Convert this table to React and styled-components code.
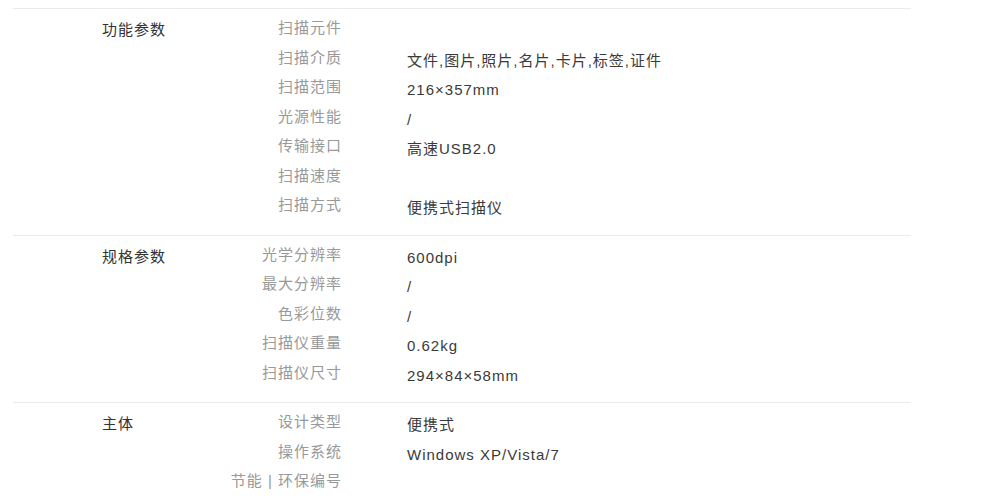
import React from 'react'
import styled, { createGlobalStyle } from 'styled-components'

const GlobalStyle = createGlobalStyle`
  body {
    margin: 8px;
    background: #fff;
    font-family: "Liberation Sans", "Noto Sans CJK SC", sans-serif;
  }
`

const sections = [
  {
    title: '功能参数',
    specs: [
      ['扫描元件', ''],
      ['扫描介质', '文件,图片,照片,名片,卡片,标签,证件'],
      ['扫描范围', '216×357mm'],
      ['光源性能', '/'],
      ['传输接口', '高速USB2.0'],
      ['扫描速度', ''],
      ['扫描方式', '便携式扫描仪'],
    ],
  },
  {
    title: '规格参数',
    specs: [
      ['光学分辨率', '600dpi'],
      ['最大分辨率', '/'],
      ['色彩位数', '/'],
      ['扫描仪重量', '0.62kg'],
      ['扫描仪尺寸', '294×84×58mm'],
    ],
  },
  {
    title: '主体',
    specs: [
      ['设计类型', '便携式'],
      ['操作系统', 'Windows XP/Vista/7'],
      ['节能 | 环保编号', ''],
    ],
  },
]

const App = () => {
  return (
    <>
      <GlobalStyle />
      <Table>
        {sections.map((s) => (
          <Section key={s.title}>
            <GroupTitle>{s.title}</GroupTitle>
            <SpecList>
              {s.specs.map(([label, value]) => (
                <Row key={label}>
                  <Label>{label}</Label>
                  <Value>{value}</Value>
                </Row>
              ))}
            </SpecList>
          </Section>
        ))}
      </Table>
    </>
  )
}

export default App

const Table = styled.div`
  margin-left: 5px;
  width: 898px;
  font-size: 15px;
  letter-spacing: 1px;
`

const Section = styled.div`
  display: grid;
  grid-template-columns: 200px 1fr;
  border-top: 1px solid #ebebeb;
  padding: 4px 0 15px;
`

const GroupTitle = styled.div`
  padding: 2px 0 0 89px;
  line-height: 29.5px;
  color: #333;
`

const SpecList = styled.div`
  display: flex;
  flex-direction: column;
`

const Row = styled.div`
  display: grid;
  grid-template-columns: 128px 1fr;
  column-gap: 66px;
  height: 29.5px;
`

const Label = styled.div`
  text-align: right;
  line-height: 29.5px;
  color: #999;
  white-space: nowrap;
  margin-right: -1px;
`

const Value = styled.div`
  padding-top: 3px;
  line-height: 29.5px;
  color: #3a3a3a;
  white-space: nowrap;
`
